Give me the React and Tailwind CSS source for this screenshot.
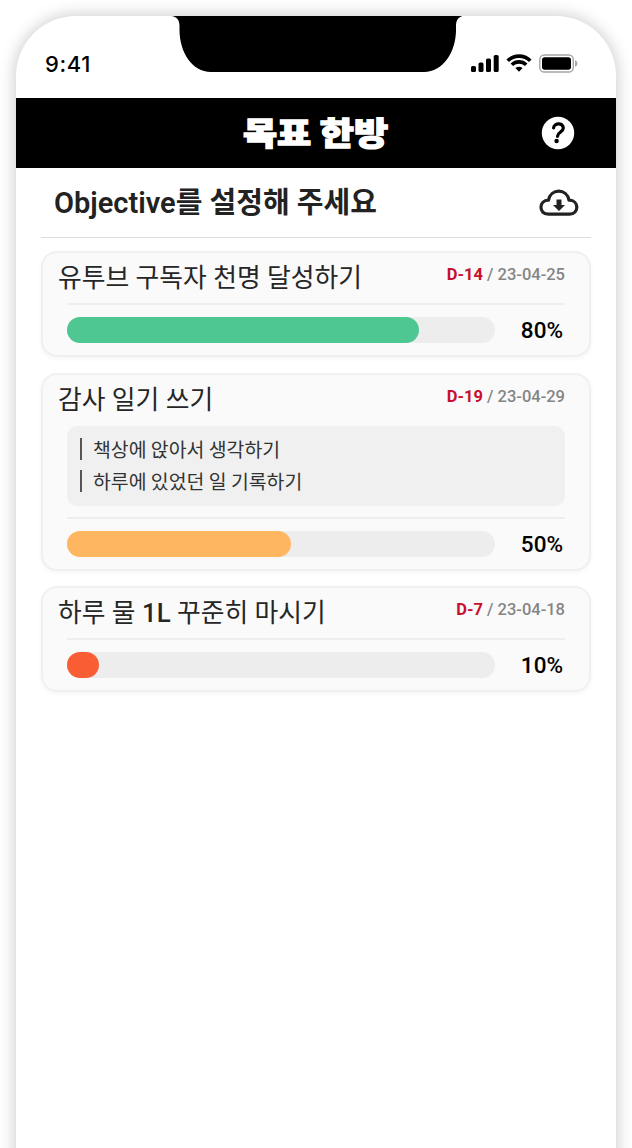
import React from "react";

const goals = [
  { title: "유투브 구독자 천명 달성하기", d: "D-14", date: "23-04-25", pct: 80, bar: 352, color: "bg-[#4ec792]", details: [] },
  { title: "감사 일기 쓰기", d: "D-19", date: "23-04-29", pct: 50, bar: 224, color: "bg-[#ffb660]", details: ["책상에 앉아서 생각하기", "하루에 있었던 일 기록하기"] },
  { title: ["하루 물 ", "1L", " 꾸준히 마시기"], d: "D-7", date: "23-04-18", pct: 10, bar: 32, color: "bg-[#f95d34]", details: [] },
];

function StatusBar() {
  return (
    <div className="relative flex h-[82px] shrink-0 items-start justify-between pl-[29px] pr-[38px]">
      <svg className="absolute left-[156px] top-0" width="290" height="56" viewBox="0 0 290 56">
        <path d="M0 0C5 1 7.5 4 7.5 10V14C7.5 36 20 56 39 56H252C271 56 284 36 284 14V10C284 4 286.500 0.500 291 0Z" />
      </svg>
      <span className="mt-[32px] font-['Inter','Noto_Sans_CJK_KR',sans-serif] text-[22px] font-medium leading-8 tracking-[0.6px] text-black">9:41</span>
      <svg className="mt-[36px]" width="107" height="22" viewBox="0 0 107 22">
        <rect x="0" y="14" width="5" height="6" rx="1.6" />
        <rect x="7.500" y="10.500" width="5" height="9.500" rx="1.600" />
        <rect x="15" y="6.500" width="5" height="13.500" rx="1.600" />
        <rect x="22.700" y="3" width="5" height="17" rx="1.600" />
        <g fill="none" stroke="#000" strokeWidth="3.600">
          <path d="M36.700 8.800C43 2.600 53 2.600 59.300 8.800" />
          <path d="M40.800 12.800C45 8.900 51 8.900 55.200 12.800" />
        </g>
        <path d="M48 19.800L44.400 16.100C46.500 14.300 49.500 14.300 51.600 16.100Z" />
        <rect x="68.800" y="3" width="33.500" height="17" rx="4.600" fill="none" stroke="#a5a5a5" strokeWidth="1.400" />
        <rect x="71" y="5.300" width="29" height="12.400" rx="2.700" />
        <path d="M104 8.300C107.300 9.400 107.300 13.600 104 14.700Z" fill="#aaa" />
      </svg>
    </div>
  );
}

function Header() {
  return (
    <header className="relative flex h-[70px] shrink-0 items-center justify-center bg-black text-white">
      <h1 className="-mt-1 scale-x-[1.18] font-['Noto_Sans_CJK_KR',sans-serif] text-[31.500px] font-black leading-[66px] [-webkit-text-stroke:1.300px_white]">목표 한방</h1>
      <svg className="absolute right-[41px] top-[18px]" width="34" height="34" viewBox="0 0 34 34">
        <circle cx="17" cy="17" r="16.200" fill="white" />
        <path d="M12.600 11.800C13 7 22.300 6.300 22.300 12C22.300 16 16.800 16 16.500 20.300" fill="none" stroke="black" strokeWidth="3.200" strokeLinecap="round" />
        <circle cx="15.600" cy="25" r="2.200" fill="black" />
      </svg>
    </header>
  );
}

function GoalCard({ goal }) {
  return (
    <article className="rounded-[16px] border-2 border-[#f0f0f0] bg-[#fafafa] pb-[12px] pl-[15px] pr-[24px] shadow-[0_2px_5px_rgba(0,0,0,0.04)]">
      <div className="flex h-[50px] items-start justify-between">
        <h2 className="whitespace-pre pt-[6px] font-['Roboto','Noto_Sans_CJK_KR',sans-serif] text-[25.800px] leading-[38px] text-[#262626]">
          {Array.isArray(goal.title) ? <>{goal.title[0]}<span className="font-medium">{goal.title[1]}</span>{goal.title[2]}</> : goal.title}
        </h2>
        <p className="pt-[11px] font-['Roboto',sans-serif] text-[16.500px] font-medium leading-[22px] text-[#858585]"><span className="font-bold text-[#c8102e]">{goal.d}</span> / {goal.date}</p>
      </div>
      {goal.details.length > 0 && (
        <ul className="mb-[11px] ml-[9px] mt-px flex h-[80px] flex-col rounded-[10px] bg-[#f0f0f0] pl-[13px] pt-[7px]">
          {goal.details.map((item) => (
            <li key={item} className="flex h-8 items-center gap-[11px]">
              <span className="h-[22px] w-[2px] bg-[#555]" />
              <span className="font-['Noto_Sans_CJK_KR',sans-serif] text-[19.400px] leading-8 text-[#333]">{item}</span>
            </li>
          ))}
        </ul>
      )}
      <div className="ml-[9px] flex h-[40px] items-end justify-between border-t-2 border-[#eeeeee]">
        <div className="h-[26px] w-[428px] rounded-full bg-[#ededed]">
          <div className={`h-full rounded-full ${goal.color}`} style={{ width: goal.bar }} />
        </div>
        <span className="pr-[2px] font-['Roboto',sans-serif] text-[22.500px] font-medium leading-[26px] text-black">{goal.pct}%</span>
      </div>
    </article>
  );
}

export default function App() {
  return (
    <div className="h-[1148px] w-[632px] overflow-hidden bg-white px-4 pt-4">
      <div className="flex h-[1200px] flex-col overflow-hidden rounded-t-[60px] bg-white shadow-[0_0_17px_rgba(0,0,0,0.230)]">
        <StatusBar />
        <Header />
        <main className="px-[25px]">
          <div className="flex h-[70px] items-center justify-between border-b-[1.500px] border-[#dddddd] pl-[13px] pr-[12px]">
            <p className="font-['Roboto','Noto_Sans_CJK_KR',sans-serif] text-[29px] font-semibold leading-[40px] text-[#222]">Objective<span className="font-bold">를 설정해 주세요</span></p>
            <svg className="mt-px" width="40" height="28" viewBox="0 0 40 28">
              <path d="M9.500 25.200C-.8 25.200-.3 11.300 9.500 11.200C11.500-.8 28-.8 30 11.200C40.200 11 40.500 25.200 30.500 25.200Z" fill="none" stroke="#222" strokeWidth="3.200" strokeLinejoin="round" />
              <path d="M17.500 10.500h5v5.500h3.500L20 22l-6-6h3.500Z" fill="#222" />
            </svg>
          </div>
          <div className="flex flex-col gap-[15.500px] pt-[13px]">
            {goals.map((goal) => <GoalCard key={goal.d} goal={goal} />)}
          </div>
        </main>
      </div>
    </div>
  );
}
